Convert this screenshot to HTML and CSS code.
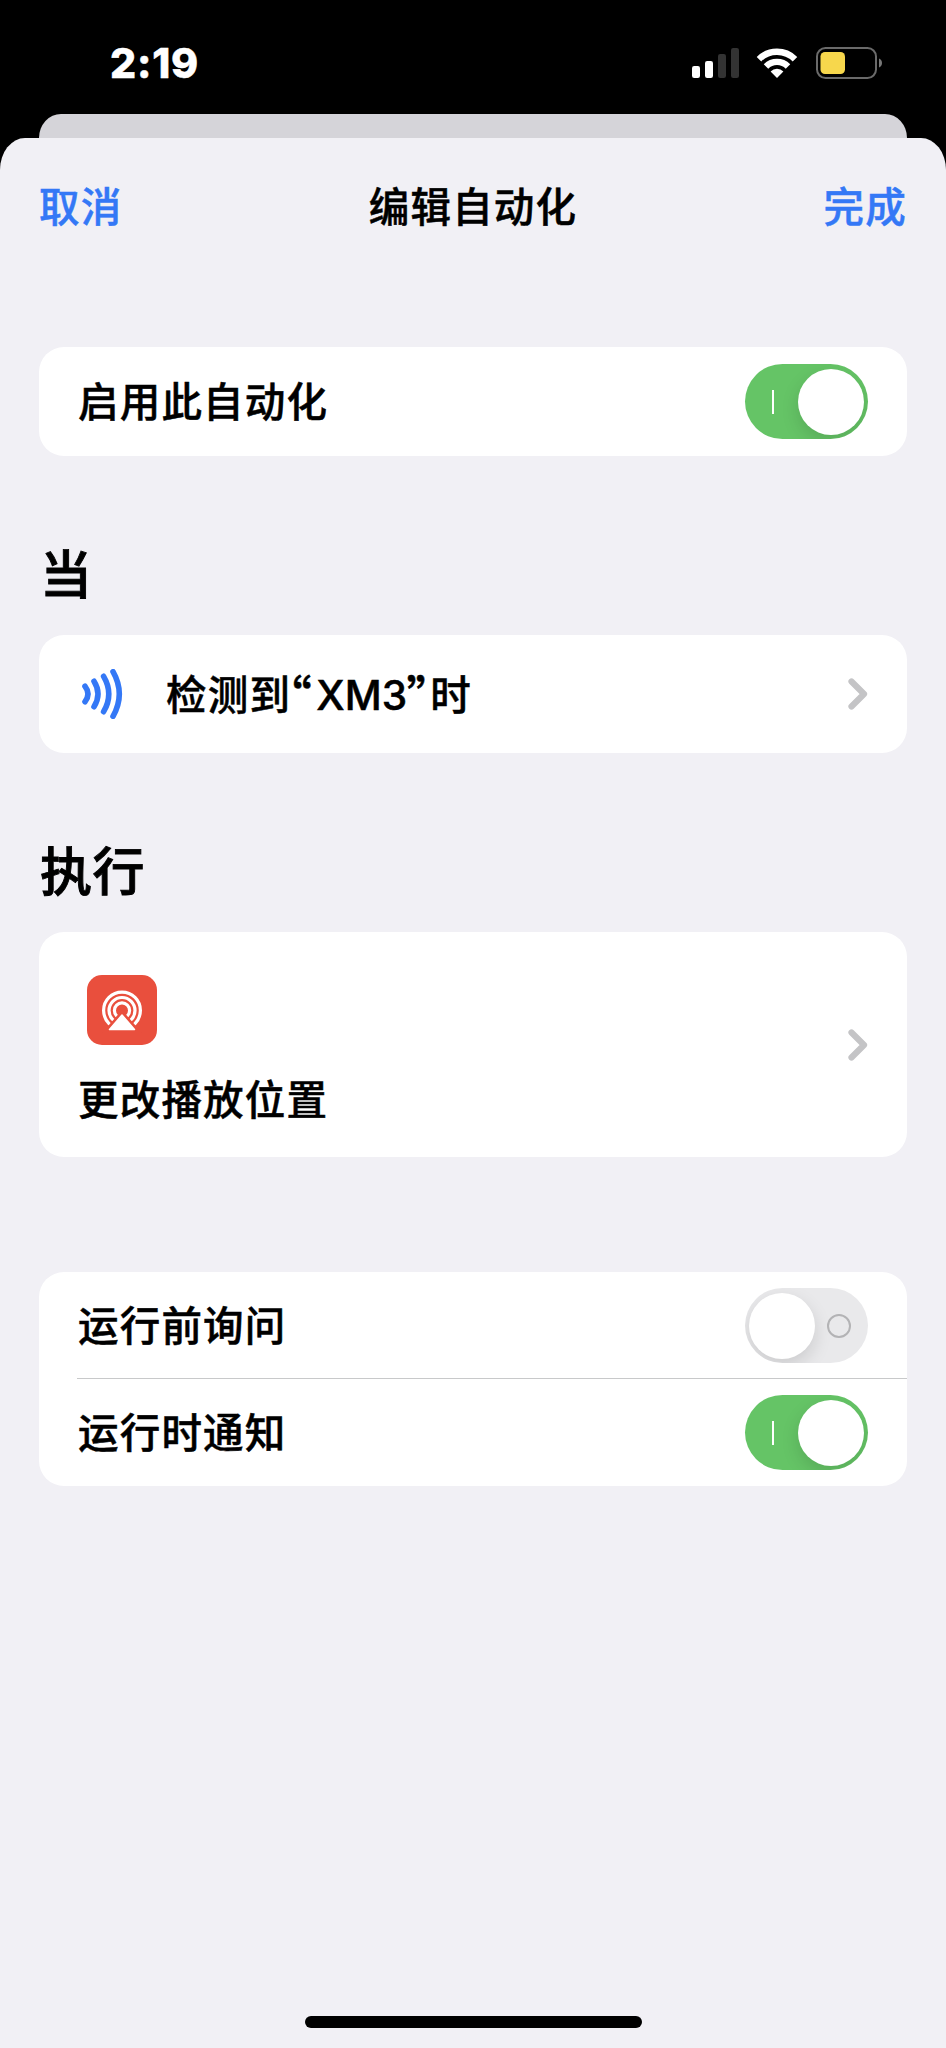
FILE: index.html
```html
<!DOCTYPE html>
<html lang="zh-CN">
  <head>
    <meta charset="UTF-8" />
    <meta name="viewport" content="width=device-width, initial-scale=1.0" />
    <title>编辑自动化</title>
    <link rel="stylesheet" href="styles.css">
  </head>
  <body>
    <header class="status-bar">
      <span class="time">2:19</span>
      <div class="status-icons">
        <svg width="48" height="32" viewBox="0 0 48 32">
          <rect x="0" y="19" width="8" height="12" rx="2.2" fill="#fff" />
          <rect x="13" y="14" width="8" height="17" rx="2.2" fill="#fff" />
          <rect x="26" y="7" width="8" height="24" rx="2.2" fill="#333" />
          <rect x="39" y="1" width="8" height="30" rx="2.2" fill="#333" />
        </svg>
        <svg class="wifi" width="42" height="32" viewBox="0 0 42 32">
          <g fill="none" stroke="#fff" stroke-width="6.4">
            <path d="M3 12.2a25.5 25.5 0 0 1 36 0" />
            <path d="M10 19.4a15.6 15.6 0 0 1 22 0" />
          </g>
          <path d="M21 31l-6.4-6.6a9 9 0 0 1 12.8 0z" fill="#fff" />
        </svg>
        <svg width="67" height="32" viewBox="0 0 67 32">
          <rect x="1" y="1" width="59" height="30" rx="8.5" fill="none" stroke="#6a6a6a" stroke-width="2" />
          <rect x="4.5" y="5" width="24.5" height="22" rx="4.5" fill="#f7d74c" />
          <path d="M63 11.5c4 1.5 4 7.5 0 9z" fill="#777" />
        </svg>
      </div>
    </header>

    <div class="back-sheet"></div>

    <main class="sheet">
      <nav class="nav-bar">
        <a class="nav-link">取消</a>
        <h1>编辑自动化</h1>
        <a class="nav-link done">完成</a>
      </nav>

      <section class="card enable">
        <div class="row">
          <span>启用此自动化</span>
          <div class="toggle on"><i class="mark"></i><i class="knob"></i></div>
        </div>
      </section>

      <h2>当</h2>
      <section class="card trigger">
        <svg class="waves" width="42" height="50" viewBox="0 0 42 50">
          <g fill="none" stroke="#3478f6" stroke-width="5.6" stroke-linecap="round">
            <path d="M3 17.3Q9 25 3 32.7" />
            <path d="M12 12.3Q20 25 12 37.7" />
            <path d="M21.6 7.3Q32 25 21.6 42.7" />
            <path d="M31 2.7Q43.6 25 31 47.3" />
          </g>
        </svg>
        <span class="label">检测到<span class="quote open">“</span><span class="device">XM3</span><span class="quote close">”</span>时</span>
        <svg class="chevron" width="20" height="32" viewBox="0 0 20 32">
          <path d="M3.5 3.5L16 16L3.5 28.5" fill="none" stroke="#c4c4c6" stroke-width="6.2" stroke-linecap="round" stroke-linejoin="round" />
        </svg>
      </section>

      <h2>执行</h2>
      <section class="card action">
        <div class="action-info">
          <svg class="airplay" width="70" height="70" viewBox="0 0 70 70">
            <rect width="70" height="70" rx="15" fill="#e94f3d" />
            <g fill="none" stroke="#fff" stroke-width="3.2">
              <circle cx="35" cy="35.5" r="18.4" />
              <circle cx="35" cy="35.5" r="13" />
              <circle cx="35" cy="35.5" r="7.6" />
            </g>
            <path d="M35 35L15 58H55Z" fill="#e94f3d" />
            <path d="M35 40L22.5 54.5H47.5Z" fill="#fff" stroke="#fff" stroke-width="1.5" stroke-linejoin="round" />
          </svg>
          <span>更改播放位置</span>
        </div>
        <svg class="chevron" width="20" height="32" viewBox="0 0 20 32">
          <path d="M3.5 3.5L16 16L3.5 28.5" fill="none" stroke="#c4c4c6" stroke-width="6.2" stroke-linecap="round" stroke-linejoin="round" />
        </svg>
      </section>

      <section class="card options">
        <div class="row">
          <span>运行前询问</span>
          <div class="toggle"><i class="knob"></i><i class="mark"></i></div>
        </div>
        <div class="row">
          <span>运行时通知</span>
          <div class="toggle on"><i class="mark"></i><i class="knob"></i></div>
        </div>
      </section>

      <div class="home-indicator"></div>
    </main>
  </body>
</html>
```

FILE: styles.css
```css
* {
  box-sizing: border-box;
}
body {
  margin: 0;
  height: 2048px;
  display: flex;
  flex-direction: column;
  background: #000;
  color: #000;
  font-family: "Inter", "Noto Sans CJK SC", sans-serif;
  font-size: 40.5px;
  font-weight: 500;
  line-height: 60px;
  letter-spacing: 1.2px;
  -webkit-text-stroke: 0.5px;
  overflow: hidden;
}
svg {
  display: block;
  flex: none;
}

/* status bar */
.status-bar {
  height: 114px;
  display: flex;
  justify-content: space-between;
  padding: 47px 63px 0 110px;
}
.time {
  color: #fff;
  font-size: 41px;
  font-weight: 800;
  line-height: 32px;
  letter-spacing: 0.8px;
}
.status-icons {
  display: flex;
}
.wifi {
  margin: 0 18px 0 16px;
}

/* sheets */
.back-sheet {
  height: 24px;
  margin: 0 39px;
  background: #d5d4d9;
  border-radius: 22px 22px 0 0 / 24px 24px 0 0;
}
.sheet {
  flex: 1;
  display: flex;
  flex-direction: column;
  padding: 0 39px;
  background: #f1f0f5;
  border-radius: 25px 25px 0 0 / 32px 32px 0 0;
}
.nav-bar {
  height: 209px;
  padding-top: 40px;
  display: grid;
  grid-template-columns: 1fr auto 1fr;
  align-items: start;
}
.nav-link {
  color: #3478f6;
}
.done {
  text-align: right;
}
h1 {
  margin: 0;
  font-size: 40.5px;
  font-weight: 500;
}
h2 {
  margin: 80px 0 19px 1px;
  font-size: 52px;
  font-weight: 500;
  line-height: 80px;
  letter-spacing: 0.5px;
  -webkit-text-stroke: 0.9px;
}

/* cards */
.card {
  background: #fff;
  border-radius: 25px;
  padding: 0 39px;
}
.row {
  display: flex;
  align-items: center;
  justify-content: space-between;
  height: 109px;
}
.row > span {
  padding-top: 3px;
}
.trigger {
  height: 118px;
  display: flex;
  align-items: center;
}
.trigger .label {
  padding-top: 4px;
}
.waves {
  margin: 0 42px 0 4px;
}
.quote {
  font-family: "Noto Sans CJK SC", sans-serif;
  font-feature-settings: "palt";
  font-size: 46px;
  line-height: 1;
  vertical-align: -4px;
}
.device {
  letter-spacing: 0;
}
.open {
  margin-left: -3px;
  margin-right: 4px;
}
.close {
  margin-right: -1px;
}
.chevron {
  margin-left: auto;
}
.action {
  height: 225px;
  display: flex;
  align-items: center;
}
.action-info {
  display: flex;
  flex-direction: column;
  gap: 26px;
  padding-top: 16px;
}
.airplay {
  margin-left: 9px;
}
.options {
  margin-top: 115px;
  padding-left: 38px;
  padding-right: 0;
}
.options .row {
  height: 106px;
  padding: 1px 39px 0 1px;
}
.options .row + .row {
  height: 108px;
  padding-top: 0;
  border-top: 1px solid #c8c9ca;
}

/* toggles */
.toggle {
  display: flex;
  align-items: center;
  justify-content: space-between;
  width: 123px;
  height: 75px;
  padding: 0 17px 0 4px;
  border-radius: 38px;
  background: #e9e9eb;
  overflow: hidden;
}
.toggle .knob {
  width: 66px;
  height: 66px;
  border-radius: 50%;
  background: #fff;
  box-shadow: 0 7px 18px rgba(0, 0, 0, 0.13);
}
.toggle .mark {
  width: 24px;
  height: 24px;
  border: 2.5px solid #b3b3b5;
  border-radius: 50%;
}
.toggle.on {
  padding: 0 4px 0 27px;
  background: #65c466;
}
.toggle.on .mark {
  width: 2px;
  height: 24px;
  border: 0;
  border-radius: 0;
  background: #fff;
}

.home-indicator {
  width: 337px;
  height: 12px;
  margin: auto auto 20px;
  border-radius: 6px;
  background: #000;
}
```
